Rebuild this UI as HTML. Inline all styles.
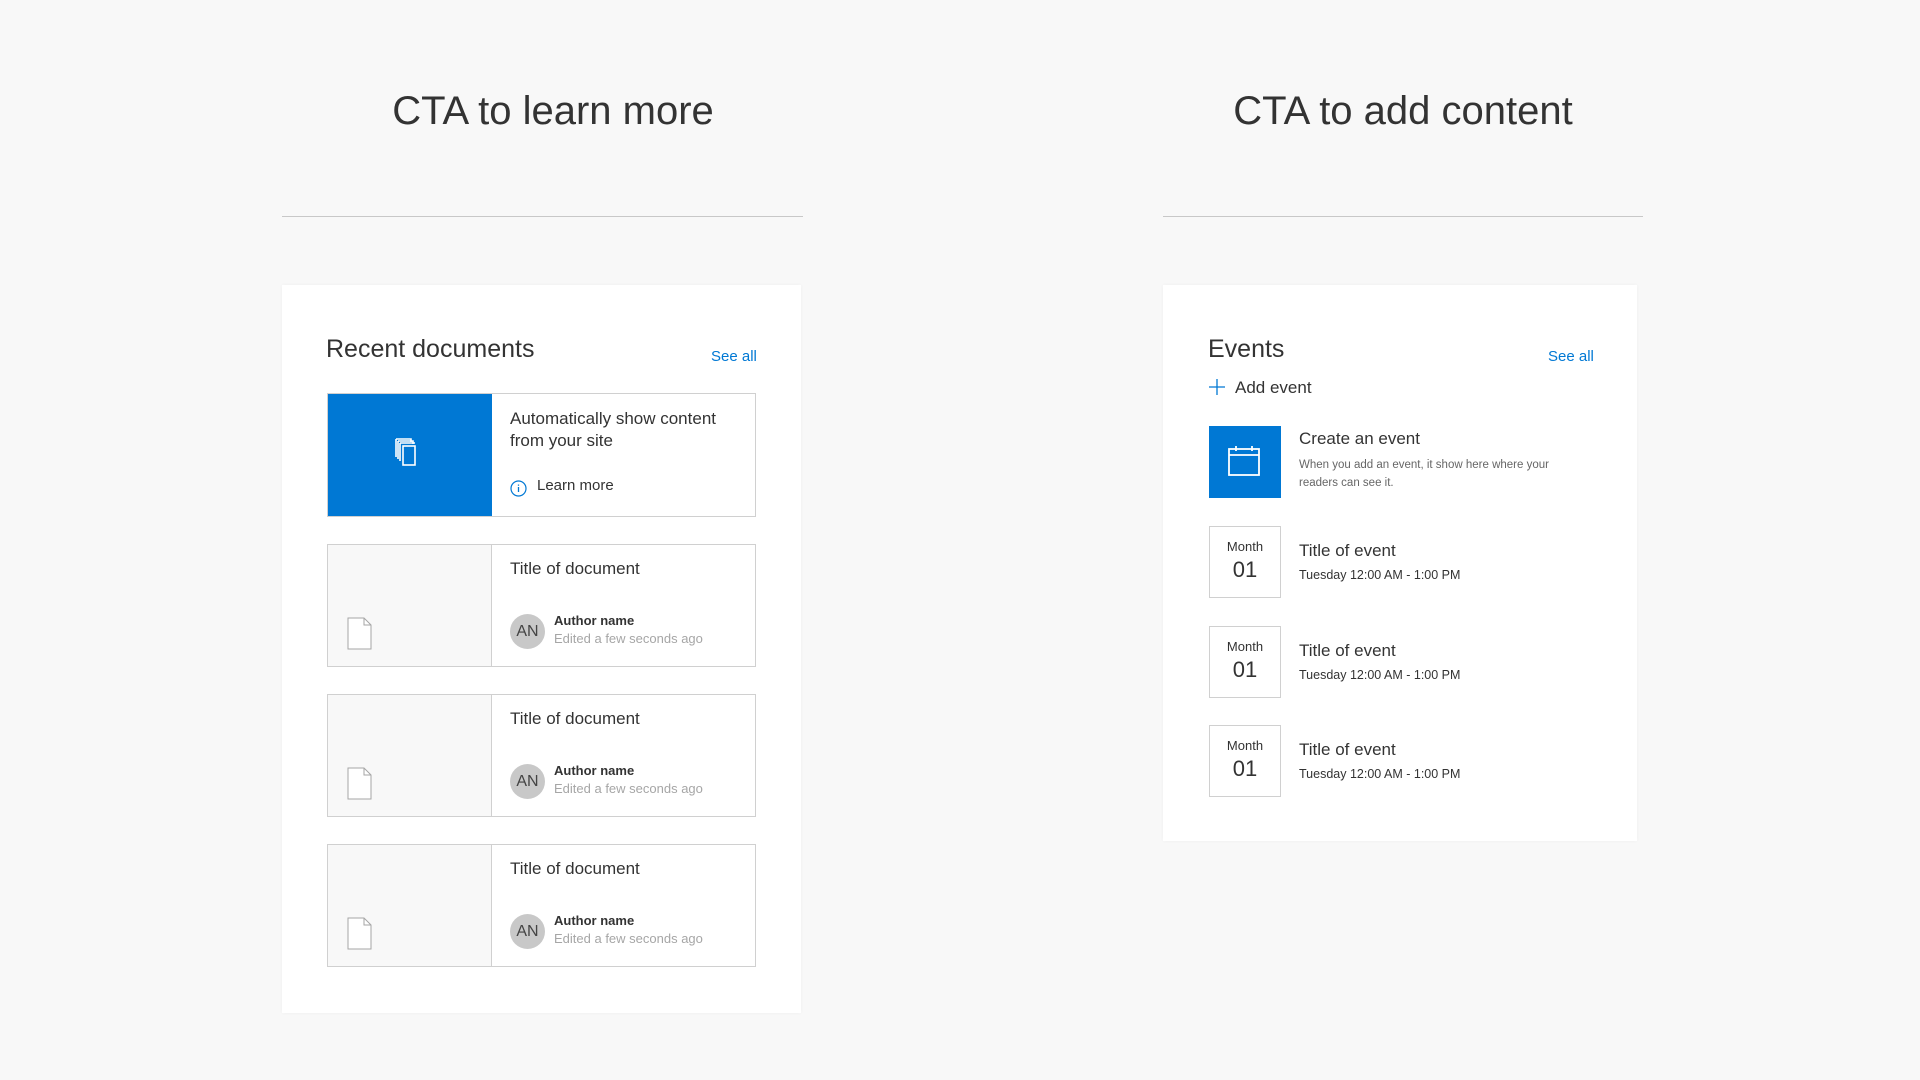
<!DOCTYPE html>
<html><head><meta charset="utf-8"><style>
*{margin:0;padding:0;box-sizing:border-box}
body{width:1920px;height:1080px;background:#f8f8f8;font-family:"Segoe UI","Liberation Sans",sans-serif;color:#333;position:relative;overflow:hidden}
.a{position:absolute;white-space:nowrap}
.h{font-size:40px;font-weight:300;color:#333;transform:translateX(-50%);top:89px}
.line{position:absolute;height:1px;background:#c8c8c8;top:216px}
.card{position:absolute;background:#fff;box-shadow:0 0 4px rgba(0,0,0,.04)}
.tile{position:absolute;left:327px;width:429px;height:123px;border:1px solid #d0d0d0;background:#fff}
.thumb{position:absolute;left:0;top:0;width:164px;height:121px;background:#f8f8f8;border-right:1px solid #d0d0d0}
.blue{background:#0078d4}
.t17{font-size:17px;color:#333}
.av{position:absolute;width:35px;height:35px;border-radius:50%;background:#c8c8c8;color:#444;font-size:16px;text-align:center;line-height:35px}
.date{position:absolute;left:1209px;width:72px;height:72px;border:1px solid #d0d0d0;text-align:center;background:#fff}
.date .m{font-size:13px;margin-top:12px}
.date .d{font-size:22px;margin-top:3px}
</style></head><body>
<div class="a h" style="left:553px">CTA to learn more</div>
<div class="a h" style="left:1403px">CTA to add content</div>
<div class="line" style="left:282px;width:521px"></div>
<div class="line" style="left:1163px;width:480px"></div>

<div class="card" style="left:282px;top:285px;width:519px;height:728px"></div>
<div class="a" style="left:326px;top:335px;font-size:25px;font-weight:300;color:#333">Recent documents</div>
<div class="a" style="left:711px;top:348px;font-size:15px;color:#0078d4">See all</div>

<div class="tile" style="top:393px;height:124px">
 <div class="thumb blue" style="height:122px;border-right:none"></div>
 <svg class="a" style="left:67px;top:43px" width="30" height="32" viewBox="0 0 30 32" fill="none" stroke="#fff" stroke-width="1.6"><path d="M1 2h15v3M3 4h15v3M5 6h15M1 2v18M3 4v18M5 6v18"/><rect x="8" y="9" width="12" height="19" fill="#0078d4"/></svg>
 <div class="a t17" style="left:182px;top:14px;line-height:22px">Automatically show content<br>from your site</div>
 <svg class="a" style="left:182px;top:86px" width="17" height="17" viewBox="0 0 17 17"><circle cx="8.5" cy="8.5" r="7.5" fill="none" stroke="#0078d4" stroke-width="1.2"/><path d="M8.5 7v5M8.5 4.5v1.3" stroke="#0078d4" stroke-width="1.3"/></svg>
 <div class="a" style="left:209px;top:83px;font-size:15px;color:#333">Learn more</div>
</div>

<div class="tile" style="top:544px"><div class="thumb"></div>
 <svg class="a" style="left:19px;top:72px" width="26" height="33" viewBox="0 0 26 33"><path d="M1 1h16l7 7v24H1z" fill="#fff" stroke="#a6a6a6"/><path d="M17 1v7h7" fill="none" stroke="#a6a6a6"/></svg>
 <div class="a t17" style="left:182px;top:14px">Title of document</div>
 <div class="av" style="left:182px;top:69px">AN</div>
 <div class="a" style="left:226px;top:68px;font-size:13px;font-weight:bold;color:#333">Author name</div>
 <div class="a" style="left:226px;top:86px;font-size:13px;color:#a6a6a6">Edited a few seconds ago</div>
</div>
<div class="tile" style="top:694px"><div class="thumb"></div>
 <svg class="a" style="left:19px;top:72px" width="26" height="33" viewBox="0 0 26 33"><path d="M1 1h16l7 7v24H1z" fill="#fff" stroke="#a6a6a6"/><path d="M17 1v7h7" fill="none" stroke="#a6a6a6"/></svg>
 <div class="a t17" style="left:182px;top:14px">Title of document</div>
 <div class="av" style="left:182px;top:69px">AN</div>
 <div class="a" style="left:226px;top:68px;font-size:13px;font-weight:bold;color:#333">Author name</div>
 <div class="a" style="left:226px;top:86px;font-size:13px;color:#a6a6a6">Edited a few seconds ago</div>
</div>
<div class="tile" style="top:844px"><div class="thumb"></div>
 <svg class="a" style="left:19px;top:72px" width="26" height="33" viewBox="0 0 26 33"><path d="M1 1h16l7 7v24H1z" fill="#fff" stroke="#a6a6a6"/><path d="M17 1v7h7" fill="none" stroke="#a6a6a6"/></svg>
 <div class="a t17" style="left:182px;top:14px">Title of document</div>
 <div class="av" style="left:182px;top:69px">AN</div>
 <div class="a" style="left:226px;top:68px;font-size:13px;font-weight:bold;color:#333">Author name</div>
 <div class="a" style="left:226px;top:86px;font-size:13px;color:#a6a6a6">Edited a few seconds ago</div>
</div>

<div class="card" style="left:1163px;top:285px;width:474px;height:556px"></div>
<div class="a" style="left:1208px;top:335px;font-size:25px;font-weight:300;color:#333">Events</div>
<div class="a" style="left:1548px;top:348px;font-size:15px;color:#0078d4">See all</div>
<svg class="a" style="left:1209px;top:379px" width="16" height="16"><path d="M8 0v16M0 8h16" stroke="#0078d4" stroke-width="1.3"/></svg>
<div class="a t17" style="left:1235px;top:378px">Add event</div>
<div class="a blue" style="left:1209px;top:426px;width:72px;height:72px"></div>
<svg class="a" style="left:1228px;top:446px" width="33" height="30" viewBox="0 0 33 30" fill="none" stroke="#fff" stroke-width="1.8"><rect x="1" y="3" width="30" height="26"/><path d="M1 9h30M8 0v5M24 0v5"/></svg>
<div class="a t17" style="left:1299px;top:429px">Create an event</div>
<div class="a" style="left:1299px;top:456px;font-size:11.5px;color:#666;line-height:18px">When you add an event, it show here where your<br>readers can see it.</div>

<div class="date" style="top:526px"><div class="m">Month</div><div class="d">01</div></div>
<div class="a t17" style="left:1299px;top:541px">Title of event</div>
<div class="a" style="left:1299px;top:568px;font-size:12.5px">Tuesday 12:00 AM - 1:00 PM</div>

<div class="date" style="top:626px"><div class="m">Month</div><div class="d">01</div></div>
<div class="a t17" style="left:1299px;top:641px">Title of event</div>
<div class="a" style="left:1299px;top:668px;font-size:12.5px">Tuesday 12:00 AM - 1:00 PM</div>

<div class="date" style="top:725px"><div class="m">Month</div><div class="d">01</div></div>
<div class="a t17" style="left:1299px;top:740px">Title of event</div>
<div class="a" style="left:1299px;top:767px;font-size:12.5px">Tuesday 12:00 AM - 1:00 PM</div>
</body></html>
